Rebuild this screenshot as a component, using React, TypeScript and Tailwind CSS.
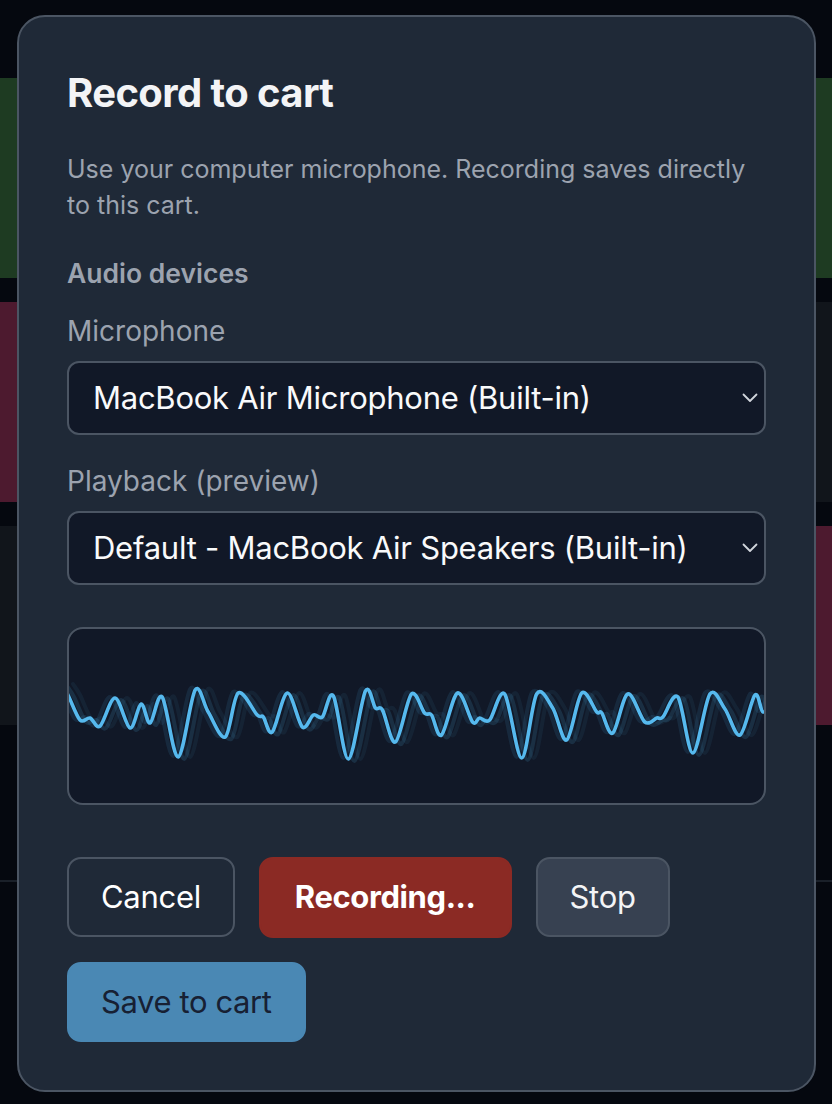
import React from "react";

const wavePoints: [number, number][] = [
  [62, 684], [69, 695], [81, 720], [91, 718], [101, 726], [116, 698], [131, 728],
  [142, 704], [151, 723], [163, 697], [179, 757], [196, 690], [209, 712],
  [226, 737], [239, 693], [258, 715], [264, 717], [273, 732], [288, 693],
  [303, 727], [314, 715], [323, 717], [334, 696], [349, 759], [366, 691],
  [376, 708], [383, 710], [396, 742], [412, 694], [425, 713], [432, 715],
  [442, 735], [458, 693], [473, 722], [480, 718], [490, 720], [505, 694],
  [522, 758], [537, 694], [553, 708], [567, 740], [582, 693], [597, 712],
  [602, 713], [613, 733], [628, 694], [645, 722], [657, 718], [663, 717],
  [678, 697], [693, 753], [710, 694], [725, 709], [740, 735], [755, 695],
  [763, 712], [772, 700],
];

// catmull-rom -> cubic bezier
function smoothPath(pts: [number, number][]) {
  let d = `M${pts[0][0]},${pts[0][1]}`;
  for (let i = 0; i < pts.length - 1; i++) {
    const p0 = pts[i - 1] ?? pts[i];
    const p1 = pts[i];
    const p2 = pts[i + 1];
    const p3 = pts[i + 2] ?? p2;
    const t = 0.16;
    const c1x = p1[0] + (p2[0] - p0[0]) * t;
    const c1y = p1[1] + (p2[1] - p0[1]) * t;
    const c2x = p2[0] - (p3[0] - p1[0]) * t;
    const c2y = p2[1] - (p3[1] - p1[1]) * t;
    d += ` C${c1x.toFixed(1)},${c1y.toFixed(1)} ${c2x.toFixed(1)},${c2y.toFixed(1)} ${p2[0]},${p2[1]}`;
  }
  return d;
}

function Waveform() {
  const d = smoothPath(wavePoints);
  return (
    <div className="h-[178px] overflow-hidden rounded-[16px] border-2 border-[#4b5563] bg-[#111827]">
      <svg
        className="block h-full w-full"
        viewBox="70 629 694 174"
        preserveAspectRatio="none"
      >
        <g fill="none" strokeLinecap="round" strokeLinejoin="round">
          <path d={d} stroke="#4aa8dc" strokeOpacity="0.16" strokeWidth="4" transform="translate(6 2)" />
          <path d={d} stroke="#4aa8dc" strokeOpacity="0.12" strokeWidth="4" transform="translate(-5 -1)" />
          <path d={d} stroke="#4aa8dc" strokeOpacity="0.08" strokeWidth="4" transform="translate(12 0)" />
          <path d={d} stroke="#56b9ee" strokeWidth="3.6" />
        </g>
      </svg>
    </div>
  );
}

function Chevron() {
  return (
    <svg width="16" height="10" viewBox="0 0 16 10" className="shrink-0">
      <path d="M1.5 1.5 L8 8 L14.5 1.5" fill="none" stroke="#d1d5db" strokeWidth="1.8" strokeLinecap="round" strokeLinejoin="round" />
    </svg>
  );
}

function DeviceSelect({ label, value, className }: { label: string; value: string; className?: string }) {
  return (
    <div className={className}>
      <p className="text-[28px] leading-[40px] text-[#9ca3af]">{label}</p>
      <div className="mt-[10px] flex h-[74px] items-center justify-between rounded-[12px] border-2 border-[#4b5563] bg-[#111827] pl-6 pr-[6px]">
        <span className="text-[31px] tracking-[-0.25px] text-[#f9fafb]">{value}</span>
        <Chevron />
      </div>
    </div>
  );
}

export default function App() {
  return (
    <div className="relative h-[1104px] w-[832px] overflow-hidden bg-[#05080f] font-['Inter',sans-serif]">
      {/* page behind the dialog */}
      <div className="grid grid-cols-2 gap-6 pt-[78px]">
        <div className="h-[200px] bg-[#1e3b22]" />
        <div className="h-[200px] bg-[#1e3b22]" />
        <div className="h-[200px] bg-[#4d1a2f]" />
        <div className="h-[200px] bg-[#11151b]" />
        <div className="h-[199px] bg-[#11151b]" />
        <div className="h-[199px] bg-[#4d1a2f]" />
      </div>
      <div className="mt-[155px] border-t-2 border-[#1a2029]" />

      {/* dialog */}
      <div className="absolute inset-0 flex justify-start pl-[17px] pt-[15px]">
        <div className="h-fit w-[799px] rounded-[28px] border-2 border-[#4b5563] bg-[#1f2937] px-12 pb-12 pt-12">
          <h2 className="text-[40px] font-bold leading-[56px] tracking-[-0.6px] text-[#f3f4f6]">Record to cart</h2>
          <p className="mt-[30px] text-[25px] leading-[36px] text-[#9ca3af]">
            Use your computer microphone. Recording saves directly to this cart.
          </p>

          <p className="mt-8 text-[26.5px] font-semibold leading-[36px] text-[#9ca3af]">Audio devices</p>
          <DeviceSelect className="mt-5" label="Microphone" value="MacBook Air Microphone (Built-in)" />
          <DeviceSelect className="mt-[26px]" label="Playback (preview)" value="Default - MacBook Air Speakers (Built-in)" />

          <div className="mt-[42px]">
            <Waveform />
          </div>

          <div className="mt-[52px] flex gap-6">
            <button className="h-[80px] rounded-[14px] border-2 border-[#4b5563] px-8 text-[31px] tracking-[-0.3px] text-white">
              Cancel
            </button>
            <button className="h-[81px] rounded-[14px] border-2 border-[#8b2a24] bg-[#8b2a24] px-[34px] text-[31px] font-bold tracking-[-0.4px] text-white">
              Recording...
            </button>
            <button className="h-[80px] rounded-[14px] border-2 border-[#4b5563] bg-[#374151] px-8 text-[31px] tracking-[-0.3px] text-[#f3f4f6]">
              Stop
            </button>
          </div>
          <div className="mt-6 flex">
            <button className="h-[80px] rounded-[14px] border-2 border-[#4a88b4] bg-[#4a88b4] px-8 text-[31px] tracking-[-0.4px] text-[#172033]">
              Save to cart
            </button>
          </div>
        </div>
      </div>
    </div>
  );
}
